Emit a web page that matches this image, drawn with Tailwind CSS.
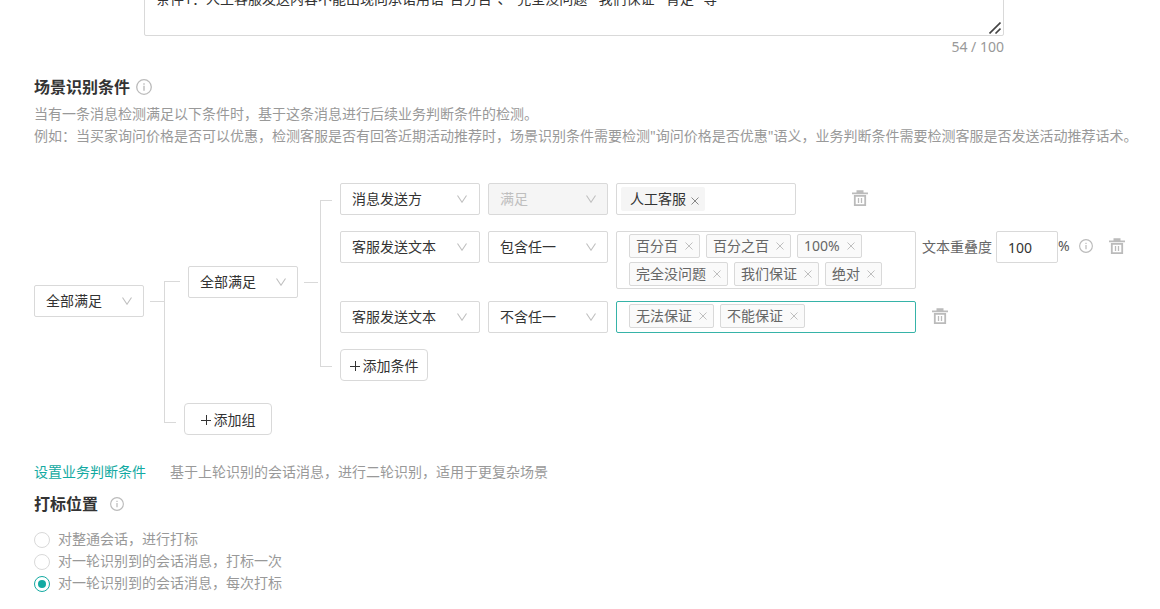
<!DOCTYPE html>
<html lang="zh-CN">
<head>
<meta charset="utf-8">
<meta name="viewport" content="width=device-width, initial-scale=1">
<title>质检规则</title>
<script src="https://cdn.jsdelivr.net/npm/@tailwindcss/browser@4"></script>
</head>
<body class="overflow-hidden bg-white font-['Noto_Sans','Noto_Sans_CJK_SC',sans-serif] text-sm leading-[22px] font-normal text-[#333]">
<svg class="hidden" aria-hidden="true">
  <symbol id="chev" viewBox="0 0 10 8"><path d="M.5.5 5 7.2 9.500.5" fill="none" stroke="currentColor" stroke-width="1.1"/></symbol>
  <symbol id="x" viewBox="0 0 8 8"><path d="M.5.5l7 7M7.500.5l-7 7" fill="none" stroke="currentColor" stroke-width="1"/></symbol>
  <symbol id="trash" viewBox="0 0 16 16"><path d="M4.500 2.500V.2h7v2.300H16v1.800H0V2.500z" fill="currentColor"/><path d="M2.800 5.900h10.400v9.200H2.800z" fill="none" stroke="currentColor" stroke-width="1.800"/><path d="M6.500 8v5M9.500 8v5" stroke="currentColor" stroke-width="1.300"/></symbol>
  <symbol id="info" viewBox="0 0 16 16"><circle cx="8" cy="8" r="7.300" fill="none" stroke="currentColor" stroke-width="1.300"/><path d="M8 6.800v5M8 4.200v1.500" stroke="currentColor" stroke-width="1.400"/></symbol>
  <symbol id="plus" viewBox="0 0 10 10"><path d="M0 5.500h10M5.500 0v10" stroke="currentColor" stroke-width="1"/></symbol>
</svg>
<main class="flex flex-col pl-[34px]">
  <section class="-mt-[17px] ml-[110px] flex w-[860px] max-w-full flex-col">
    <div class="relative flex">
      <textarea aria-label="规则说明" class="h-[53px] w-full resize-none overflow-hidden rounded-xs border border-[#d9d9d9] px-[11px] py-1 outline-none">条件1：人工客服发送内容不能出现向承诺用语"百分百"、"完全没问题""我们保证""肯定" 等</textarea>
      <svg class="absolute right-[3px] bottom-0.5 size-3 text-[#444]" viewBox="0 0 12 12"><path d="M.5 11.500 11.500.5M6.500 11.500l5-5" fill="none" stroke="currentColor" stroke-width="1.600"/></svg>
    </div>
    <div class="text-right text-[#999]">54 / 100</div>
  </section>

  <h2 class="mt-[17px] flex items-center gap-1.5 text-base leading-6 font-bold">场景识别条件<svg class="size-4 text-[#bbb]"><use href="#info"/></svg></h2>
  <p class="mt-1 whitespace-nowrap text-[#999]">当有一条消息检测满足以下条件时，基于这条消息进行后续业务判断条件的检测。</p>
  <p class="whitespace-nowrap text-[#999]">例如：当买家询问价格是否可以优惠，检测客服是否有回答近期活动推荐时，场景识别条件需要检测"询问价格是否优惠"语义，业务判断条件需要检测客服是否发送活动推荐话术。</p>

  <section class="mt-9 flex items-stretch">
    <label class="relative mt-[102px] h-8 w-[110px] shrink-0">
      <select aria-label="组间关系" class="h-8 w-full appearance-none rounded-xs border border-[#d9d9d9] bg-white px-[11px]"><option>全部满足</option></select>
      <svg class="pointer-events-none absolute top-3 right-3 h-2 w-2.5 text-[#bfbfbf]"><use href="#chev"/></svg>
    </label>
    <div class="mt-[118px] ml-1.5 h-px w-3.5 shrink-0 bg-[#d9d9d9]"></div>
    <div class="mt-[98px] mb-3 w-px shrink-0 bg-[#d9d9d9]"></div>
    <div class="flex flex-1 flex-col">
      <div class="flex items-stretch">
        <div class="mt-[98px] h-px w-[15px] shrink-0 bg-[#d9d9d9]"></div>
        <label class="relative mt-[83px] ml-2 h-8 w-[110px] shrink-0">
          <select aria-label="组内关系" class="h-8 w-full appearance-none rounded-xs border border-[#d9d9d9] bg-white px-[11px]"><option>全部满足</option></select>
          <svg class="pointer-events-none absolute top-3 right-3 h-2 w-2.5 text-[#bfbfbf]"><use href="#chev"/></svg>
        </label>
        <div class="mt-[99px] ml-1.5 h-px w-3.5 shrink-0 bg-[#d9d9d9]"></div>
        <div class="mt-[17px] mb-3.5 ml-0.5 w-3 shrink-0 border-y border-l border-[#d9d9d9]"></div>
        <div class="ml-2 flex flex-col items-start">
          <div class="flex items-start gap-2">
            <label class="relative h-8 w-[140px] shrink-0">
              <select aria-label="条件字段" class="h-8 w-full appearance-none rounded-xs border border-[#d9d9d9] bg-white px-[11px]"><option>消息发送方</option></select>
              <svg class="pointer-events-none absolute top-3 right-[13px] h-2 w-2.5 text-[#bfbfbf]"><use href="#chev"/></svg>
            </label>
            <label class="relative h-8 w-[120px] shrink-0">
              <select aria-label="条件关系" disabled class="h-8 w-full appearance-none rounded-xs border border-[#d9d9d9] bg-[#f5f5f5] px-[11px] text-[#bfbfbf] opacity-100"><option>满足</option></select>
              <svg class="pointer-events-none absolute top-3 right-3 h-2 w-2.5 text-[#bfbfbf]"><use href="#chev"/></svg>
            </label>
            <div class="flex h-8 w-[180px] items-center rounded-xs border border-[#d9d9d9] px-1">
              <span class="flex h-6 items-center gap-[5px] rounded-xs bg-[#f5f5f5] pr-1.5 pl-[9px]">人工客服<button aria-label="移除人工客服" class="pt-1 text-[#888]"><svg class="size-2"><use href="#x"/></svg></button></span>
            </div>
            <button aria-label="删除条件" class="mt-[7px] ml-12 text-[#bbb]"><svg class="size-4"><use href="#trash"/></svg></button>
          </div>

          <div class="mt-4 flex items-start">
            <label class="relative h-8 w-[140px] shrink-0">
              <select aria-label="条件字段" class="h-8 w-full appearance-none rounded-xs border border-[#d9d9d9] bg-white px-[11px]"><option>客服发送文本</option></select>
              <svg class="pointer-events-none absolute top-3 right-[13px] h-2 w-2.5 text-[#bfbfbf]"><use href="#chev"/></svg>
            </label>
            <label class="relative ml-2 h-8 w-[120px] shrink-0">
              <select aria-label="条件关系" class="h-8 w-full appearance-none rounded-xs border border-[#d9d9d9] bg-white px-[11px]"><option>包含任一</option></select>
              <svg class="pointer-events-none absolute top-3 right-3 h-2 w-2.5 text-[#bfbfbf]"><use href="#chev"/></svg>
            </label>
            <div class="ml-2 flex min-h-8 w-[300px] shrink-0 flex-wrap content-start gap-x-1.5 gap-y-1 rounded-xs border border-[#d9d9d9] px-3 py-0.5 text-[#666]">
              <span class="flex h-6 items-center gap-[7px] rounded-xs border border-[#d9d9d9] bg-[#fafafa] px-1.5">百分百<button aria-label="移除百分百" class="text-[#bfbfbf]"><svg class="size-2"><use href="#x"/></svg></button></span>
              <span class="flex h-6 items-center gap-[7px] rounded-xs border border-[#d9d9d9] bg-[#fafafa] px-1.5">百分之百<button aria-label="移除百分之百" class="text-[#bfbfbf]"><svg class="size-2"><use href="#x"/></svg></button></span>
              <span class="flex h-6 items-center gap-[7px] rounded-xs border border-[#d9d9d9] bg-[#fafafa] px-1.5">100%<button aria-label="移除100%" class="text-[#bfbfbf]"><svg class="size-2"><use href="#x"/></svg></button></span>
              <span class="flex h-6 items-center gap-[7px] rounded-xs border border-[#d9d9d9] bg-[#fafafa] px-1.5">完全没问题<button aria-label="移除完全没问题" class="text-[#bfbfbf]"><svg class="size-2"><use href="#x"/></svg></button></span>
              <span class="flex h-6 items-center gap-[7px] rounded-xs border border-[#d9d9d9] bg-[#fafafa] px-1.5">我们保证<button aria-label="移除我们保证" class="text-[#bfbfbf]"><svg class="size-2"><use href="#x"/></svg></button></span>
              <span class="flex h-6 items-center gap-[7px] rounded-xs border border-[#d9d9d9] bg-[#fafafa] px-1.5">绝对<button aria-label="移除绝对" class="text-[#bfbfbf]"><svg class="size-2"><use href="#x"/></svg></button></span>
            </div>
            <label for="overlap" class="ml-1.5 shrink-0 leading-8 text-[#666]">文本重叠度</label>
            <input id="overlap" value="100" class="ml-1 h-8 w-[62px] rounded-xs border border-[#d9d9d9] px-[11px]">
            <span class="leading-[30px] text-[#555]">%</span>
            <svg class="mt-2 ml-[9px] size-3.5 shrink-0 text-[#bbb]"><use href="#info"/></svg>
            <button aria-label="删除条件" class="mt-[7px] ml-4 text-[#bbb]"><svg class="size-4"><use href="#trash"/></svg></button>
          </div>

          <div class="mt-3 flex items-start gap-2">
            <label class="relative h-8 w-[140px] shrink-0">
              <select aria-label="条件字段" class="h-8 w-full appearance-none rounded-xs border border-[#d9d9d9] bg-white px-[11px]"><option>客服发送文本</option></select>
              <svg class="pointer-events-none absolute top-3 right-[13px] h-2 w-2.5 text-[#bfbfbf]"><use href="#chev"/></svg>
            </label>
            <label class="relative h-8 w-[120px] shrink-0">
              <select aria-label="条件关系" class="h-8 w-full appearance-none rounded-xs border border-[#d9d9d9] bg-white px-[11px]"><option>不含任一</option></select>
              <svg class="pointer-events-none absolute top-3 right-3 h-2 w-2.5 text-[#bfbfbf]"><use href="#chev"/></svg>
            </label>
            <div class="flex min-h-8 w-[300px] shrink-0 flex-wrap content-start gap-x-1.5 gap-y-1 rounded-xs border border-[#36b3a8] px-3 py-0.5 text-[#666]">
              <span class="flex h-6 items-center gap-[7px] rounded-xs border border-[#d9d9d9] bg-[#fafafa] px-1.5">无法保证<button aria-label="移除无法保证" class="text-[#bfbfbf]"><svg class="size-2"><use href="#x"/></svg></button></span>
              <span class="flex h-6 items-center gap-[7px] rounded-xs border border-[#d9d9d9] bg-[#fafafa] px-1.5">不能保证<button aria-label="移除不能保证" class="text-[#bfbfbf]"><svg class="size-2"><use href="#x"/></svg></button></span>
            </div>
            <button aria-label="删除条件" class="mt-[7px] ml-2 text-[#bbb]"><svg class="size-4"><use href="#trash"/></svg></button>
          </div>

          <button class="mt-4 flex h-8 w-[88px] items-center justify-center gap-[3px] rounded border border-[#d9d9d9] pt-0.5"><svg class="size-2.5"><use href="#plus"/></svg>添加条件</button>
        </div>
      </div>
      <div class="mt-[22px] flex">
        <div class="mt-[19px] h-px w-[11px] bg-[#d9d9d9]"></div>
        <button class="ml-2 flex h-8 w-[88px] items-center justify-center gap-[3px] rounded border border-[#d9d9d9] pt-0.5"><svg class="size-2.5"><use href="#plus"/></svg>添加组</button>
      </div>
    </div>
  </section>

  <div class="mt-[26px] flex gap-6 text-[#999]"><a href="#" class="text-[#13aaa2]">设置业务判断条件</a><span>基于上轮识别的会话消息，进行二轮识别，适用于更复杂场景</span></div>

  <h2 class="mt-[9px] flex items-center gap-3 text-base leading-6 font-bold">打标位置<svg class="size-3.5 text-[#bbb]"><use href="#info"/></svg></h2>
  <div class="mt-3 flex flex-col items-start text-[#999]">
    <label class="flex items-center gap-2"><input type="radio" name="pos" class="mt-0.5 size-4 appearance-none rounded-full border border-[#d9d9d9] checked:border-[#13aaa2] checked:bg-[#13aaa2] checked:bg-clip-content checked:p-[3px]">对整通会话，进行打标</label>
    <label class="flex items-center gap-2"><input type="radio" name="pos" class="mt-0.5 size-4 appearance-none rounded-full border border-[#d9d9d9] checked:border-[#13aaa2] checked:bg-[#13aaa2] checked:bg-clip-content checked:p-[3px]">对一轮识别到的会话消息，打标一次</label>
    <label class="flex items-center gap-2"><input type="radio" name="pos" checked class="mt-0.5 size-4 appearance-none rounded-full border border-[#d9d9d9] checked:border-[#13aaa2] checked:bg-[#13aaa2] checked:bg-clip-content checked:p-[3px]">对一轮识别到的会话消息，每次打标</label>
  </div>
</main>
</body>
</html>
